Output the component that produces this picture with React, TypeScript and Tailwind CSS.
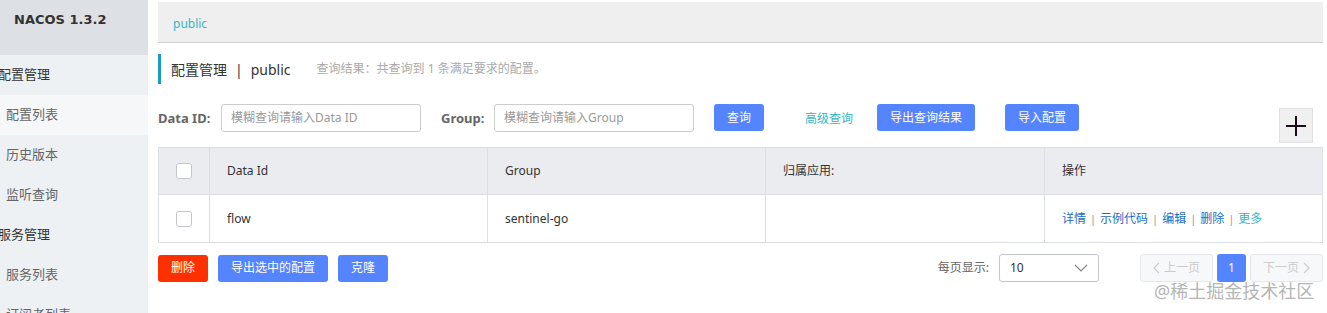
const font = "font-['Noto_Sans','Noto_Sans_CJK_SC',sans-serif]";

const Checkbox = () => (
  <span className="inline-block w-4 h-4 rounded-[3px] border border-[#c4c6cf] bg-white" />
);

const Btn = ({ label, w, red }: { label: string; w: string; red?: boolean }) => (
  <button
    className={`${w} h-[27px] rounded-[3px] text-[12px] text-white flex items-center justify-center ${red ? 'bg-[#ff3000]' : 'bg-[#5584ff]'}`}
  >
    {label}
  </button>
);

const Sidebar = () => {
  const items = [
    { label: '配置管理', head: true },
    { label: '配置列表', active: true },
    { label: '历史版本' },
    { label: '监听查询' },
    { label: '服务管理', head: true },
    { label: '服务列表' },
    { label: '订阅者列表' },
  ];
  return (
    <aside className="w-[148px] shrink-0 bg-[#eef1f4] h-[313px] overflow-hidden">
      <div className="h-[55px] bg-[#dde1e6] flex items-center pl-[14px] pb-[16px]">
        <span className="text-[13px] font-bold text-[#333] font-['DejaVu_Sans',sans-serif]">NACOS 1.3.2</span>
      </div>
      {items.map(it => (
        <div
          key={it.label}
          className={`h-[40px] flex items-center text-[13px] ${it.head ? 'pl-0 -ml-[2px] text-[#333]' : 'pl-[6px] text-[#666]'} ${it.active ? 'bg-[#f6f7f9]' : ''}`}
        >
          {it.label}
        </div>
      ))}
    </aside>
  );
};

const Toolbar = () => (
  <div className="flex items-start mt-[20px]">
    <span className="w-[63px] shrink-0 text-[13px] font-bold text-[#666] mt-[5px]">Data ID:</span>
    <div className="w-[200px] h-[28px] border border-[#ccc] rounded-[3px] flex items-center px-[9px] text-[12px] text-[#999]">
      模糊查询请输入Data ID
    </div>
    <span className="ml-[20px] w-[53px] shrink-0 text-[13px] font-bold text-[#666] mt-[5px]">Group:</span>
    <div className="w-[200px] h-[28px] border border-[#ccc] rounded-[3px] flex items-center px-[9px] text-[12px] text-[#999]">
      模糊查询请输入Group
    </div>
    <div className="ml-[20px]"><Btn label="查询" w="w-[50px]" /></div>
    <span className="ml-[41px] mt-[6px] text-[12px] text-[#33b5c6]">高级查询</span>
    <div className="ml-[24px]"><Btn label="导出查询结果" w="w-[98px]" /></div>
    <div className="ml-[30px]"><Btn label="导入配置" w="w-[74px]" /></div>
    <div className="ml-auto mr-[10px] mt-[4px] w-[34px] h-[35px] bg-[#f0f0f0] border border-[#e0e0e0] flex items-center justify-center">
      <svg width="22" height="22" viewBox="0 0 22 22">
        <path d="M11 1v20M1 11h20" stroke="#1a0a1a" strokeWidth="2" />
      </svg>
    </div>
  </div>
);

const Table = () => {
  const cell = 'border-l border-[#dcdee3] pl-[17px] flex items-center';
  const sep = <span className="text-[#999] text-[11px]">|</span>;
  return (
    <div className="mt-[4px] border border-[#dcdee3] text-[12px] text-[#333]">
      <div className="grid grid-cols-[50px_278px_278px_279px_1fr] h-[47px] bg-[#ebecf0] border-b border-[#dcdee3]">
        <div className="flex items-center justify-center"><Checkbox /></div>
        <div className={cell}>Data Id</div>
        <div className={cell}>Group</div>
        <div className={cell}>归属应用:</div>
        <div className={cell}>操作</div>
      </div>
      <div className="grid grid-cols-[50px_278px_278px_279px_1fr] h-[47px] bg-white">
        <div className="flex items-center justify-center"><Checkbox /></div>
        <div className={cell}>flow</div>
        <div className={cell}>sentinel-go</div>
        <div className={cell}></div>
        <div className={`${cell} gap-[4px] pt-[1px]`}>
          <span className="text-[#1b6ec2]">详情</span>
          {sep}
          <span className="text-[#1b6ec2]">示例代码</span>
          {sep}
          <span className="text-[#1b6ec2]">编辑</span>
          {sep}
          <span className="text-[#1b6ec2]">删除</span>
          {sep}
          <span className="text-[#33b5c6]">更多</span>
        </div>
      </div>
    </div>
  );
};

const Footer = () => (
  <div className="mt-[11px] flex items-center">
    <Btn label="删除" w="w-[50px]" red />
    <div className="ml-[10px]"><Btn label="导出选中的配置" w="w-[110px]" /></div>
    <div className="ml-[10px]"><Btn label="克隆" w="w-[50px]" /></div>
    <span className="ml-auto text-[12px] text-[#666]">每页显示:</span>
    <div className="ml-[10px] w-[100px] h-[28px] border border-[#c4c6cf] rounded-[3px] flex items-center justify-between pl-[10px] pr-[10px] text-[12px] text-[#333]">
      10
      <svg width="14" height="10" viewBox="0 0 14 10">
        <path d="M1 2l6 6 6-6" fill="none" stroke="#888" strokeWidth="1.2" />
      </svg>
    </div>
    <div className="ml-[41px] w-[73px] h-[28px] border border-[#e6e7eb] bg-[#f7f8fa] rounded-[3px] flex items-center justify-center gap-[3px] text-[12px] text-[#ccc]">
      <svg width="8" height="12" viewBox="0 0 8 12"><path d="M6 1L1 6l5 5" fill="none" stroke="#ccc" strokeWidth="1.2" /></svg>
      上一页
    </div>
    <div className="ml-[4px] w-[29px] h-[28px] bg-[#5584ff] rounded-[3px] flex items-center justify-center text-[12px] text-white">1</div>
    <div className="ml-[4px] w-[73px] h-[28px] border border-[#e6e7eb] bg-[#f7f8fa] rounded-[3px] flex items-center justify-center gap-[3px] text-[12px] text-[#ccc]">
      下一页
      <svg width="8" height="12" viewBox="0 0 8 12"><path d="M2 1l5 5-5 5" fill="none" stroke="#ccc" strokeWidth="1.2" /></svg>
    </div>
  </div>
);

export default function App() {
  return (
    <div className={`flex w-[1327px] h-[313px] bg-white overflow-hidden relative ${font}`}>
      <Sidebar />
      <main className="flex-1 pl-[10px] pr-[4px] pt-[2px]">
        <div className="h-[41px] bg-[#efefef] border-b border-[#cfcfcf] flex items-center pl-[15px] pt-[3px] text-[12px] text-[#33b5c6]">
          public
        </div>
        <div className="mt-[11px] h-[30px] border-l-[3px] border-[#1c9ac6] flex items-center pl-[10px]">
          <span className="text-[14px] text-[#333]">配置管理</span>
          <span className="mx-[8px] text-[14px] text-[#333]">|</span>
          <span className="text-[14px] text-[#333]">public</span>
          <span className="ml-[26px] text-[12px] text-[#aaa]">查询结果：共查询到 1 条满足要求的配置。</span>
        </div>
        <Toolbar />
        <Table />
        <Footer />
      </main>
      <span className="absolute left-[1154px] top-[278px] text-[18px] text-[#b5b5b5]">@稀土掘金技术社区</span>
    </div>
  );
}
